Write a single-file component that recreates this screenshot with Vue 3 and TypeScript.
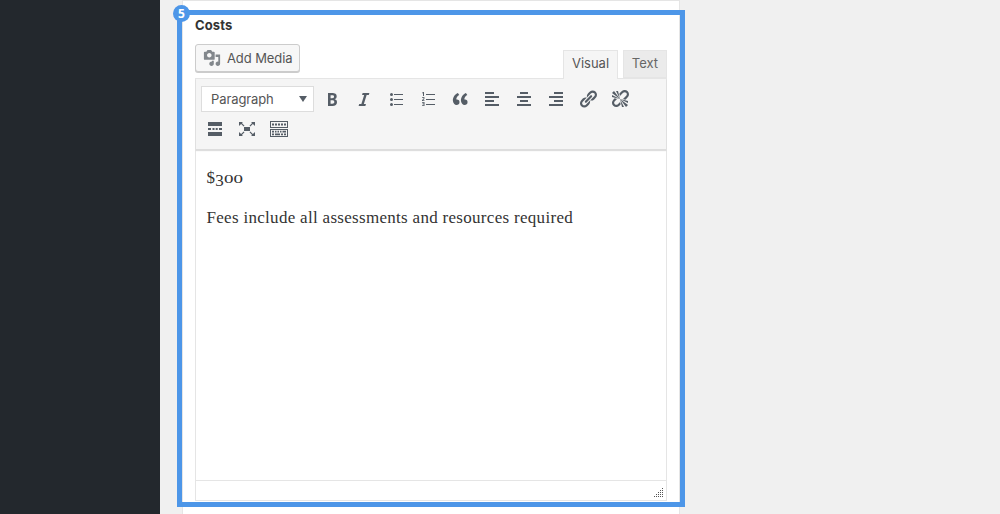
<script setup lang="ts">
interface Tool {
  name: string
  path: string
}

const firstRow: Tool[] = [
  { name: 'Bold', path: 'M6 4v13h4.54c1.37 0 2.46-.33 3.26-1 .8-.66 1.2-1.58 1.2-2.77 0-.84-.17-1.51-.51-2.01s-.9-.85-1.67-1.03v-.09c.57-.1 1.02-.4 1.36-.9s.51-1.13.51-1.91c0-1.14-.39-1.98-1.17-2.5C12.75 4.26 11.5 4 9.78 4H6zm2.57 5.15V6.26h1.36c.73 0 1.27.11 1.61.32.34.22.51.58.51 1.07 0 .54-.16.92-.47 1.15s-.82.35-1.51.35h-1.5zm0 2.19h1.6c1.44 0 2.16.53 2.16 1.61 0 .6-.17 1.05-.51 1.34s-.86.43-1.57.43H8.57v-3.38z' },
  { name: 'Italic', path: 'M14.78 6h-2.13l-2.8 9h2.12l-.62 2H4.6l.62-2h2.14l2.8-9H8.03l.62-2h6.75z' },
  { name: 'Bulleted list', path: 'M5.5 4a1.5 1.5 0 1 1 0 3a1.5 1.5 0 1 1 0-3zM5.5 9a1.5 1.5 0 1 1 0 3a1.5 1.5 0 1 1 0-3zM5.5 14a1.5 1.5 0 1 1 0 3a1.5 1.5 0 1 1 0-3zM8 5h9v1H8zM8 10h9v1H8zM8 15h9v1H8z' },
  { name: 'Numbered list', path: 'M8 5h9v1H8zM8 10h9v1H8zM8 15h9v1H8zM5 3h1v4H5zM4 3.5h1v.8H4zM4 8h2.4v2.1l-1.4 1.1h1.5v.8H4v-1l1.5-1.3v-.9H4zM4 13h2.5v4H4v-.8h1.6v-.9H4.4v-.7h1.2v-.8H4z' },
  { name: 'Blockquote', path: 'M9.49 13.22c0-.74-.2-1.38-.61-1.9-.62-.78-1.83-.88-2.53-.72-.29-1.65 1.11-3.75 2.92-4.65L7.88 4c-2.73 1.3-5.42 4.28-4.96 8.05C3.21 14.43 4.59 16 6.54 16c.85 0 1.56-.25 2.12-.75s.83-1.18.83-2.03zm8.05 0c0-.74-.2-1.38-.61-1.9-.63-.78-1.83-.88-2.53-.72-.29-1.65 1.11-3.75 2.92-4.65L15.93 4c-2.73 1.3-5.41 4.28-4.95 8.05.29 2.38 1.66 3.95 3.61 3.95.85 0 1.56-.25 2.12-.75s.83-1.18.83-2.03z' },
  { name: 'Align left', path: 'M3 3h9v2H3zM3 7h14v2H3zM3 11h9v2H3zM3 15h14v2H3z' },
  { name: 'Align center', path: 'M6 3h8v2H6zM3 7h14v2H3zM6 11h8v2H6zM3 15h14v2H3z' },
  { name: 'Align right', path: 'M8 3h9v2H8zM3 7h14v2H3zM8 11h9v2H8zM3 15h14v2H3z' },
  { name: 'Insert link', path: 'M17.74 2.76c1.68 1.69 1.68 4.41 0 6.1l-1.53 1.52c-1.12 1.12-2.7 1.47-4.14 1.09l2.62-2.61.76-.77.76-.76c.84-.84.84-2.2 0-3.04-.84-.85-2.2-.85-3.04 0l-.77.76-3.38 3.38c-.37-1.44-.02-3.02 1.1-4.14l1.52-1.53c1.69-1.68 4.42-1.68 6.1 0zM8.59 13.43l5.34-5.34c.42-.42.42-1.1 0-1.52-.44-.43-1.13-.39-1.53 0l-5.33 5.34c-.42.42-.42 1.1 0 1.52.44.43 1.13.39 1.52 0zm-.76 2.29l4.14-4.15c.38 1.44.03 3.02-1.09 4.14l-1.52 1.53c-1.69 1.68-4.41 1.68-6.1 0-1.68-1.68-1.68-4.42 0-6.1l1.53-1.52c1.12-1.12 2.7-1.47 4.14-1.1l-4.14 4.15c-.85.84-.85 2.2 0 3.05.84.84 2.2.84 3.04 0z' },
  { name: 'Remove link', path: 'M17.74 2.26c1.68 1.69 1.68 4.41 0 6.1l-1.53 1.52c-.32.33-.69.58-1.08.77L13 10l1.69-1.64.76-.77.76-.76c.84-.84.84-2.2 0-3.04-.84-.85-2.2-.85-3.04 0l-.77.76-.76.76L10 7l-.65-2.14c.19-.38.44-.75.77-1.07l1.52-1.53c1.69-1.68 4.42-1.68 6.1 0zM2 4l8 6-6-8zm4-2l4 8-2-8H6zM2 6l8 4-8-2V6zm7.36 7.69L10 13l.74 2.35-1.38 1.39c-1.69 1.68-4.41 1.68-6.1 0-1.68-1.68-1.68-4.42 0-6.1l1.39-1.38L7 10l-.69.64-1.52 1.53c-.85.84-.85 2.2 0 3.04.84.85 2.2.85 3.04 0zM18 16l-8-6 6 8zm-4 2l-4-8 2 8h2zm4-4l-8-4 8 2v2z' },
]

const secondRow: Tool[] = [
  { name: 'Read more', path: 'M3 3h14v4H3zM3 9h3v2H3zM7.5 9h2v2h-2zM10.7 9h2v2h-2zM14 9h3v2h-3zM3 13h14v4H3z' },
  { name: 'Fullscreen', path: 'M7 8h6v4H7zM2 3h4L4.9 4.1l2.6 2.6-.8.8-2.6-2.6L2 7zM18 3v4l-2.1-2.1-2.6 2.6-.8-.8 2.6-2.6L14 3zM2 17v-4l2.1 2.1 2.6-2.6.8.8-2.6 2.6L6 17zM18 17h-4l1.1-1.1-2.6-2.6.8-.8 2.6 2.6L18 13z' },
  { name: 'Toolbar toggle', path: 'M1 2h18v7H1zM2 3v5h16V3zM1 10h18v8H1zM2 11v6h16v-6zM3 4.5h2v2H3zM6 4.5h2v2H6zM9 4.5h2v2H9zM12 4.5h2v2h-2zM15 4.5h2v2h-2zM3 11.7h2v1.8H3zM6 11.7h1.5v1.8H6zM8.5 11.7H10v1.8H8.5zM11 11.7h1.5v1.8H11zM13.5 11.7h3.5v1.8h-3.5zM3 14.5h2v1.8H3zM6 14.5h5v1.8H6zM12 14.5h2v1.8h-2zM15 14.5h2v1.8h-2z' },
]

const dots: number[][] = [
  [8, 0], [6, 2], [8, 2], [4, 4], [6, 4], [8, 4],
  [2, 6], [4, 6], [6, 6], [8, 6], [0, 8], [2, 8], [4, 8], [6, 8], [8, 8],
]
</script>

<template>
  <div class="page">
    <aside class="sidebar"></aside>
    <main class="panel">
      <h2 class="label">Costs</h2>
      <div class="actions">
        <button class="media">
          <svg width="18" height="18" viewBox="0 0 20 20"><path d="M13 11V4c0-.55-.45-1-1-1h-1.67L9 1H5L3.67 3H2c-.55 0-1 .45-1 1v7c0 .55.45 1 1 1h10c.55 0 1-.45 1-1zM7 4.5c1.38 0 2.5 1.12 2.5 2.5S8.38 9.5 7 9.5 4.5 8.38 4.5 7 5.62 4.5 7 4.5zM14 6h5v10.5c0 1.38-1.12 2.5-2.5 2.5S14 17.88 14 16.5s1.12-2.5 2.5-2.5c.17 0 .34.02.5.05V9h-3V6zm-4 8.05V13h2v3.5c0 1.38-1.12 2.5-2.5 2.5S7 17.88 7 16.5 8.12 14 9.5 14c.17 0 .34.02.5.05z" /></svg>
          <span>Add Media</span>
        </button>
        <div class="tabs">
          <span class="tab active">Visual</span>
          <span class="tab">Text</span>
        </div>
      </div>
      <div class="editor">
        <div class="toolbar">
          <div class="row">
            <div class="select">
              <span>Paragraph</span>
              <svg width="8" height="6" viewBox="0 0 8 6"><path d="M0 0h8L4 6z" /></svg>
            </div>
            <svg v-for="t in firstRow" :key="t.name" class="tool" viewBox="0 0 20 20" :aria-label="t.name"><path fill-rule="evenodd" :d="t.path" /></svg>
          </div>
          <div class="row second">
            <svg v-for="t in secondRow" :key="t.name" class="tool" viewBox="0 0 20 20" :aria-label="t.name"><path fill-rule="evenodd" :d="t.path" /></svg>
          </div>
        </div>
        <div class="content">
          <p class="price">$<span class="three">3</span><span class="zero">00</span></p>
          <p class="fees">Fees include all assessments and resources required</p>
        </div>
        <div class="status">
          <svg width="9" height="9" viewBox="0 0 9 9"><rect v-for="([x, y], i) in dots" :key="i" :x="x" :y="y" width="1" height="1" /></svg>
        </div>
      </div>
    </main>
    <div class="frame"><span class="badge">5</span></div>
  </div>
</template>

<style>
body {
  margin: 0;
  overflow: hidden;
}
</style>

<style scoped>
.page {
  position: relative;
  display: flex;
  width: 1000px;
  height: 514px;
  overflow: hidden;
  background: #f0f0f0;
  color: #444;
  font: 13px/18px Inter, sans-serif;
}
.sidebar {
  width: 160px;
  background: #23282d;
}
.panel {
  box-sizing: border-box;
  width: 498px;
  margin-left: 22px;
  padding: 15px 12px 0;
  background: #fff;
  border: solid #e5e5e5;
  border-width: 1px 1px 0;
}
.label {
  margin: 0;
  height: 28px;
  color: #333;
  font-size: 13px;
  font-weight: 700;
  line-height: 18px;
  letter-spacing: .1px;
}
.actions {
  display: flex;
  justify-content: space-between;
  height: 34px;
}
.media {
  box-sizing: border-box;
  display: flex;
  align-items: center;
  width: 105px;
  height: 28px;
  padding: 0 0 0 7px;
  gap: 6px;
  font: inherit;
  letter-spacing: -.1px;
  color: #555;
  white-space: nowrap;
  background: #f7f7f7;
  border: 1px solid #ccc;
  border-radius: 3px;
  box-shadow: 0 1px 0 #ccc;
}
.media svg {
  fill: #82878c;
}
.tabs {
  display: flex;
  gap: 5px;
  padding-top: 6px;
}
.tab {
  box-sizing: border-box;
  width: 44px;
  height: 28px;
  text-align: center;
  line-height: 25px;
  color: #666;
  background: #ebebeb;
  border: 1px solid #e5e5e5;
}
.tab.active {
  position: relative;
  z-index: 1;
  width: 55px;
  height: 29px;
  color: #555;
  background: #f5f5f5;
  border-bottom: 0;
}
.editor {
  box-sizing: border-box;
  height: 423px;
  border: 1px solid #e5e5e5;
}
.toolbar {
  box-sizing: border-box;
  height: 71px;
  padding: 7px 5px 0;
  background: #f5f5f5;
  border-bottom: 1px solid #ddd;
  box-shadow: 0 1px 1px rgba(0, 0, 0, .13);
}
.row {
  display: flex;
  align-items: center;
  gap: 12px;
}
.row.second {
  margin-top: 7px;
  padding-left: 4px;
}
.select {
  box-sizing: border-box;
  display: flex;
  align-items: center;
  justify-content: space-between;
  width: 113px;
  height: 26px;
  margin-right: -4px;
  padding: 0 6px 0 9px;
  letter-spacing: -.1px;
  color: #555;
  background: #fff;
  border: 1px solid #ddd;
}
.tool {
  width: 20px;
  height: 20px;
}
.select svg,
.tool {
  fill: #555d66;
}
.content {
  box-sizing: border-box;
  height: 330px;
  padding: 15px 10.5px 0;
  color: #333;
  font: 17px/26px "Liberation Serif", serif;
  letter-spacing: .3px;
}
.content p {
  margin: 0 0 14px;
  white-space: nowrap;
}
.zero {
  display: inline-block;
  font-size: 12px;
  transform: scaleX(1.58);
  transform-origin: left;
  letter-spacing: 0;
  line-height: 1;
}
.three {
  position: relative;
  top: 3px;
}
.status {
  box-sizing: border-box;
  display: flex;
  justify-content: flex-end;
  height: 20px;
  padding: 7px 3px 0;
  border-top: 1px solid #e5e5e5;
}
.status svg {
  fill: #555;
}
.frame {
  position: absolute;
  box-sizing: border-box;
  left: 177px;
  top: 10px;
  width: 508px;
  height: 497px;
  border: 5px solid #4d96e8;
}
.badge {
  position: absolute;
  left: -9px;
  top: -10px;
  width: 17px;
  height: 17px;
  border-radius: 50%;
  background: #4d96e8;
  color: #fff;
  font: 700 12px/17px "Open Sans", sans-serif;
  text-align: center;
}
</style>
